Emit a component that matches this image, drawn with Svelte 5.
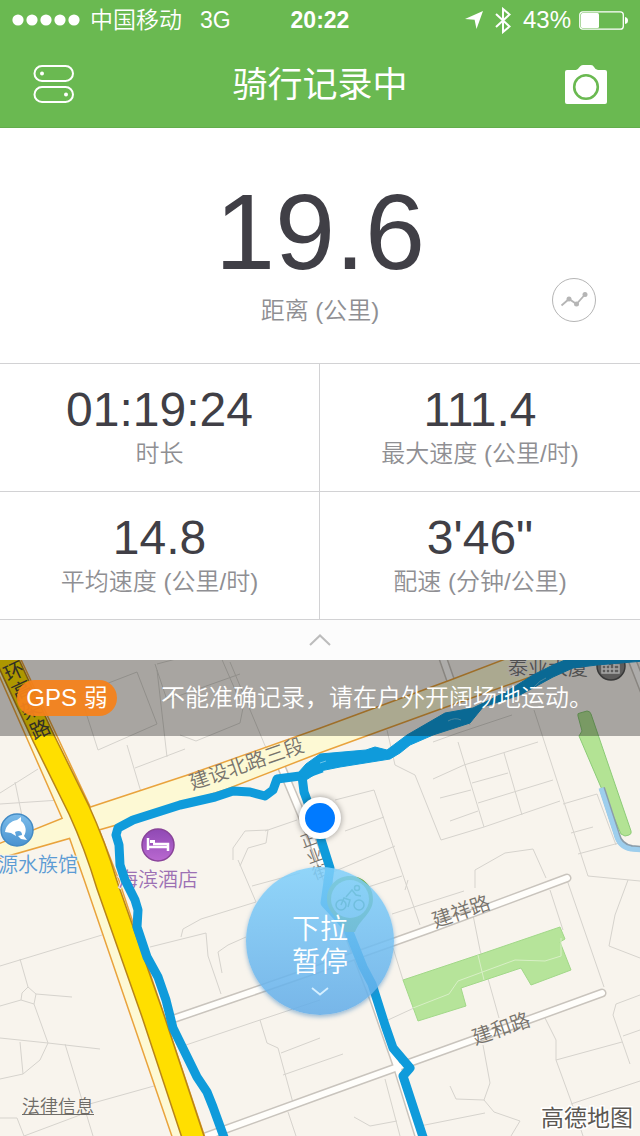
<script lang="ts">
  let stats = [
    { value: '01:19:24', label: '时长' },
    { value: '111.4', label: '最大速度 (公里/时)' },
    { value: '14.8', label: '平均速度 (公里/时)' },
    { value: '3\'46"', label: '配速 (分钟/公里)' },
  ];

  // thin outlines of blocks and buildings
  let blocks = [
    'M80 694 L137 672 L157 724 L98 750 Z M127 745 L141 792 M135 768 L185 749 M155 664 L167 700 L240 674 M180 735 L196 741 L240 723 L243 708 L220 655 M230 662 L266 748 M157 664 L210 650 M157 670 L167 757',
    'M0 793 L38 769 M15 782 L22 816 M0 804 L60 800',
    'M433 742 L458 733 L512 715 M433 779 L464 765 L538 742 M472 783 L508 773 M440 798 L471 790 M478 803 L553 780 M450 821 L478 811 M458 742 L484 827 M504 753 L522 815 M441 840 L484 827 L560 801 M387 730 L395 765 L415 775 L441 840 M470 725 L466 710 M534 710 L588 876 L640 881 M563 804 L597 794 L616 845 M571 833 L593 827 M578 854 L619 843',
    'M335 800 L374 790 L391 840 L420 925 M345 831 L384 817 M333 872 L395 846 M365 888 L402 876 M475 888 L475 870 L505 853 L533 849 L546 878 M392 914 L464 891 M405 890 L408 880',
    'M233 860 L233 848 L245 831 L268 830 L266 843 L248 848 L240 866 M265 831 L297 820 M238 860 L256 902 L201 919 L183 929 L181 937 M252 886 L300 873 M150 947 L206 933 L208 956 L221 994 M246 937 L228 945 L218 952 L222 973',
    'M0 966 L102 935 M20 959 L28 987 L22 993 L21 1000 L34 1004 L36 994 L28 987 M36 994 L72 997 M0 1006 L21 1000 M34 1004 L48 1043 L100 1049 M0 1038 L48 1043 L40 1060 L23 1074 L20 1042 M23 1074 L0 1079 M65 1044 L93 1136 M86 1105 L154 1086 M0 1118 L17 1118 L24 1136 L80 1115',
    'M183 1046 L260 1020 L320 1000 M260 1020 L267 1043 L278 1048 L293 1103 M281 1053 L320 1038 M283 1075 L343 1054 M288 1112 L296 1136 M388 1020 L414 1008 M393 948 L403 980',
    'M470 900 L480 950 L499 1018 M550 890 L563 930 M567 880 L604 987 M628 880 L615 915 L609 946 L640 958 M545 1018 L556 1040 L556 1060 L575 1112 L583 1136 M556 1060 L622 1042 M571 1104 L640 1081 M640 995 L616 1004 L613 1015 L630 1064 M623 1036 L640 1030 M483 1045 L490 1083 L484 1100 L456 1099 L450 1086 M484 1100 L494 1112 L520 1121 L511 1136 M420 1126 L485 1113 M385 1079 L400 1136 M354 1117 L370 1126 L397 1121',
  ];
</script>

<main class="screen">
  <header>
    <div class="status">
      <div class="carrier">
        <svg width="68" height="12" viewBox="0 0 68 12" aria-hidden="true">
          {#each [6, 20, 34, 48, 62] as cx}
            <circle {cx} cy="6" r="5.600" fill="#fff" />
          {/each}
        </svg>
        <span>中国移动</span>
        <span class="network">3G</span>
      </div>
      <strong>20:22</strong>
      <div class="power">
        <svg width="18" height="19" viewBox="0 0 18 19" aria-hidden="true">
          <path d="M18 0 L11.500 18 L9.600 8.800 L0 8 Z" fill="#fff" />
        </svg>
        <svg class="bluetooth" width="16" height="27" viewBox="0 0 16 27" aria-hidden="true">
          <path d="M1 7 L14.500 19.500 L8 25 V2 L14.500 7.500 L1 20" fill="none" stroke="#fff" stroke-width="2" />
        </svg>
        <span class="percent">43%</span>
        <svg width="49" height="19" viewBox="0 0 49 19" aria-hidden="true">
          <rect x="0.800" y="0.800" width="43.500" height="17.400" rx="3" fill="none" stroke="#fff" stroke-width="1.300" />
          <rect x="2" y="2" width="18" height="15" rx="1.500" fill="#fff" />
          <path d="M46 6 Q49 6.500 49 9.500 T46 13 Z" fill="#fff" />
        </svg>
      </div>
    </div>
    <div class="titlebar">
      <button class="icon" aria-label="菜单">
        <svg width="42" height="38" viewBox="0 0 42 38">
          <g fill="none" stroke="#fff" stroke-width="2">
            <rect x="1.500" y="1" width="38.500" height="15" rx="7.500" />
            <rect x="1.500" y="22" width="38.500" height="15" rx="7.500" />
          </g>
          <circle cx="9" cy="8.500" r="2" fill="#fff" />
          <circle cx="33" cy="29.500" r="2" fill="#fff" />
        </svg>
      </button>
      <h1>骑行记录中</h1>
      <button class="icon" aria-label="拍照">
        <svg width="42" height="40" viewBox="0 0 42 40">
          <path d="M2 6 H11 Q13 5.500 14.500 3 Q16 1 18 1 H26 Q28 1 29 3 Q30.500 6 33 6 H40 Q42 6 42 8 V38 Q42 40 40 40 H2 Q0 40 0 38 V8 Q0 6 2 6 Z" fill="#fff" />
          <circle cx="21" cy="23" r="11.800" fill="none" stroke="#6ab951" stroke-width="2.600" />
        </svg>
      </button>
    </div>
  </header>

  <section class="summary">
    <div class="distance">19.6</div>
    <div class="label">距离 (公里)</div>
    <button class="chart" aria-label="图表">
      <svg width="28" height="18" viewBox="0 0 28 18">
        <path d="M1.500 14.500 L9 8 L16.500 13 L25 3.500" fill="none" stroke="#b5b5b5" stroke-width="1.800" />
        <circle cx="9" cy="8" r="2.500" fill="#b5b5b5" />
        <circle cx="16.500" cy="13" r="2.500" fill="#b5b5b5" />
        <circle cx="25" cy="3.500" r="2.500" fill="#b5b5b5" />
      </svg>
    </button>
  </section>

  <section class="stats">
    {#each stats as { value, label }}
      <div class="stat">
        <div class="value">{value}</div>
        <div class="label">{label}</div>
      </div>
    {/each}
  </section>

  <button class="handle" aria-label="收起">
    <svg width="22" height="12" viewBox="0 0 22 12">
      <path d="M1 11 L11 1.500 L21 11" fill="none" stroke="#bcbcbc" stroke-width="2" />
    </svg>
  </button>

  <section class="map">
    <svg class="tiles" viewBox="0 660 640 476" role="img" aria-label="地图">
      <defs>
        <linearGradient id="aqua" x1="0" y1="0" x2="0" y2="1">
          <stop offset="0" stop-color="#7cbcea" />
          <stop offset="1" stop-color="#4a93d0" />
        </linearGradient>
        <linearGradient id="hotel" x1="0" y1="0" x2="0" y2="1">
          <stop offset="0" stop-color="#8f49b4" />
          <stop offset="1" stop-color="#b968d0" />
        </linearGradient>
      </defs>
      <rect y="660" width="640" height="476" fill="#f8f4ed" />
      {#each blocks as d}
        <path {d} fill="none" stroke="#d6d3cd" stroke-width="1" />
      {/each}

      <!-- parks and canal -->
      <path d="M578 716 Q577 713 580 713 L587 711 Q590 711 591 714 L631 831 Q632 834 629 835 L625 836 L621 834 L579 736 L582 731 Z" fill="#b3e394" stroke="#8ccb77" stroke-width="1" />
      <path d="M403 980 L481 954 L560 927 L565 939 L560 942 L571 970 L531 985 L521 968 L461 988 L466 1006 L418 1021 Z" fill="#b6e49a" stroke="#a2d889" stroke-width="1" />
      <path d="M413 1008 L449 994 L458 981 L515 960 L545 961 L561 956 V938 M478 955 L484 980" fill="none" stroke="#d8efc6" stroke-width="1" />
      <path d="M602 788 L617 834 Q620 846 632 848 L644 849" fill="none" stroke="#8b9daa" stroke-width="6" />
      <path d="M601 788 L616 834 Q619 847 631 849 L644 850" fill="none" stroke="#9dceed" stroke-width="5" />

      <!-- side streets: casing, then surface -->
      <g fill="none" stroke-linecap="round" stroke-linejoin="round">
        <g stroke="#c9c4bd" stroke-width="9">
          <path d="M170 1020 L240 996 L315 970 L430 929 L567 878" />
          <path d="M196 1140 L320 1095 L470 1041 L602 993" />
          <path d="M276 754 L312 840 L375 1003 L397 1066 L420 1140" />
          <path d="M454 690 L440 650" />
          <path d="M632 660 L650 706" />
        </g>
        <g stroke="#fffefb" stroke-width="6">
          <path d="M170 1020 L240 996 L315 970 L430 929 L567 878" />
          <path d="M196 1140 L320 1095 L470 1041 L602 993" />
          <path d="M276 754 L312 840 L375 1003 L397 1066 L420 1140" />
          <path d="M454 690 L440 650" />
          <path d="M632 660 L650 706" />
        </g>
      </g>

      <!-- main roads -->
      <g stroke="#e9a33d" stroke-width="3">
        <path d="M-20 630 L10 638 L90 808 L118 880 L205 1140 H174 L85 880 L65 823 Z" fill="#fdf9d4" />
        <path d="M-5 846 L90 808 L187 776 L320 729 L450 681 L510 658 H582 L528 677 L430 712 L320 752 L225 789 L117 824 L-5 859 Z" fill="#fdf9d4" />
      </g>
      <path d="M-20 630 L10 638 L90 808 L118 880 L205 1140 H174 L85 880 L65 823 Z" fill="#fdf9d4" />
      <path d="M-5 846 L90 808 L187 776 L320 729 L450 681 L510 658 H582 L528 677 L430 712 L320 752 L225 789 L117 824 L-5 859 Z" fill="#fdf9d4" />
      <g fill="none">
        <path d="M-2 640 L43 737 L79 810 Q95 845 107 885 L152 1013 L194 1140" stroke="#b98517" stroke-width="23" />
        <path d="M-2 640 L43 737 L79 810 Q95 845 107 885 L152 1013 L194 1140" stroke="#ffdf00" stroke-width="20" />
      </g>

      <!-- points of interest -->
      <circle cx="17" cy="830" r="16" fill="url(#aqua)" stroke="#438bc5" stroke-width="1.500" />
      <path d="M5 832 C6 825 11 821 17 820 L21 817 L21 821 C26 825 27 831 24 836 L27 840 L21 839 L18 836 L22 835 C22 831 19 830 15 832 L16 836 L11 833 Z" fill="#fff" />
      <circle cx="158" cy="845" r="16" fill="url(#hotel)" stroke="#894399" stroke-width="1.500" />
      <path d="M148 838 V850 M148 847 H168 V851 M168 847 V844 H153" fill="none" stroke="#fff" stroke-width="2.500" />
      <rect x="150" y="840" width="5" height="3" fill="#fff" />
      <circle cx="611" cy="666" r="14" fill="#898886" stroke="#555" stroke-width="1.500" />
      <path d="M602 665 H608 V661 H614 V665 H619 V673 H602 Z M606 665 V673 M610 665 V673 M614 665 V673 M602 669 H619" fill="none" stroke="#f5f5f5" stroke-width="1.500" />
      <g class="place">
        <text x="-2" y="872" fill="#5b9bd4">源水族馆</text>
        <text x="118" y="887" fill="#9c70b4">海滨酒店</text>
        <text x="508" y="675" fill="#777">泰业大厦</text>
      </g>

      <!-- road names -->
      <g class="road">
        <text transform="translate(192 790) rotate(-19)">建设北路三段</text>
        <text transform="translate(435 928) rotate(-19)">建祥路</text>
        <text transform="translate(475 1045) rotate(-19)">建和路</text>
      </g>
      <g class="road highway">
        <text transform="translate(8 682) rotate(-25)">环</text>
        <text transform="translate(16 701) rotate(-25)">高</text>
        <text transform="translate(25 720) rotate(-25)">架</text>
        <text transform="translate(34 740) rotate(-25)">路</text>
      </g>
      <g class="road small">
        <text transform="translate(303 848) rotate(-20)">正</text>
        <text transform="translate(309 864) rotate(-20)">业</text>
        <text transform="translate(315 880) rotate(-20)">街</text>
      </g>

      <!-- recorded ride -->
      <g fill="none" stroke="#0f9bdb" stroke-width="9" stroke-linejoin="round">
        <path d="M322 768 L300 776 L277 779 L273 790 L265 796 L250 792 L233 791 L215 797 L180 805 L133 820 L118 828 L116 835 L119 845 L120 865 L125 880 L135 900 L138 910 L137 927 L147 957 L158 977 L166 1000 L173 1028 L197 1077 L207 1092 L213 1107 L225 1140" />
        <path d="M302 776 L304 792 L318 830 L330 868 L325 903 L347 927 L363 967 L372 984 L385 1025 L393 1048 L410 1068 L403 1076 L424 1140" />
      </g>
      <path d="M298 773 L306 764 L320 754 L366 750 L375 747 L387 750 L407 735 L445 713 L473 708 L506 692 L533 675 L553 665 L570 658 H644 V661 L597 665 L573 668 L553 677 L520 695 L483 707 L470 723 L433 735 L410 745 L400 753 L390 759 L340 767 L320 771 L306 780 Z" fill="#0f9bdb" stroke="#0f9bdb" stroke-width="1" />
      <path d="M448 721 Q455 717 461 720 M534 687 Q540 680 546 678 M320 763 L326 761" fill="none" stroke="#6cc5e9" stroke-width="1" />

      <!-- start pin -->
      <path d="M350 876 C363 876 373 886 373 899 C373 913 360 919 355 932 H345 C340 919 327 913 327 899 C327 886 337 876 350 876 Z" fill="#6fae2f" />
      <circle cx="350" cy="899" r="19" fill="#d7efe8" />
      <g fill="none" stroke="#3f8a49" stroke-width="1.500">
        <circle cx="341" cy="905" r="5" />
        <circle cx="359" cy="905" r="5" />
        <circle cx="357" cy="888" r="2.500" />
        <path d="M341 905 L344 898 L350 900 L348 907 M346 897 L352 890 L356 895 L361 896" />
      </g>

      <!-- current position -->
      <circle class="position" cx="320" cy="818" r="21" fill="#fff" />
      <circle cx="320" cy="818" r="15" fill="#007aff" />
      <text class="brand" x="541" y="1126">高德地图</text>
    </svg>

    <div class="banner">
      <span class="gps">GPS 弱</span>
      <p>不能准确记录，请在户外开阔场地运动。</p>
    </div>

    <button class="pause">
      <span>下拉</span>
      <span>暂停</span>
      <svg width="18" height="9" viewBox="0 0 18 9" aria-hidden="true">
        <path d="M1 1 L9 7.500 L17 1" fill="none" stroke="#d5efff" stroke-width="1.800" />
      </svg>
    </button>

    <a class="legal" href="#legal">法律信息</a>
  </section>
</main>

<style>
  :global(body) {
    margin: 0;
    background: #fff;
  }

  .screen {
    display: flex;
    flex-direction: column;
    font-family: "Liberation Sans", "Noto Sans CJK SC", sans-serif;
    font-weight: 350;
    color: #403f46;
  }

  button {
    display: flex;
    align-items: center;
    justify-content: center;
    padding: 0;
    border: 0;
    background: none;
    font: inherit;
    color: inherit;
  }

  header {
    background: #6ab951;
    color: #fff;
    border-bottom: 1px solid #63ad4c;
  }

  .status {
    display: grid;
    grid-template-columns: 1fr auto 1fr;
    align-items: center;
    height: 40px;
    padding: 0 12px;
    font-size: 23px;
    line-height: 40px;
  }

  .status strong {
    font-weight: 700;
  }

  .carrier, .power {
    display: flex;
    align-items: center;
  }

  .carrier {
    gap: 10px;
  }

  .network {
    margin-left: 8px;
  }

  .power {
    justify-content: flex-end;
    gap: 8px;
  }

  .bluetooth {
    margin-left: 4px;
  }

  .percent {
    margin-left: 4px;
    font-size: 24px;
  }

  .titlebar {
    display: flex;
    align-items: center;
    justify-content: space-between;
    height: 87px;
    padding: 0 33px;
  }

  h1 {
    margin: 0;
    padding-top: 2px;
    font-size: 35px;
    line-height: 40px;
    font-weight: 400;
  }

  .summary {
    position: relative;
    padding: 44px 0 36px;
    border-bottom: 1px solid #d2d2d4;
    text-align: center;
  }

  .distance {
    padding-bottom: 3px;
    font-size: 108px;
    line-height: 120px;
  }

  .label {
    font-size: 24px;
    line-height: 32px;
    color: #8f8f93;
  }

  .chart {
    position: absolute;
    right: 44px;
    bottom: 41px;
    width: 44px;
    height: 44px;
    border: 1px solid #b5b5b5;
    border-radius: 50%;
  }

  .stats {
    display: grid;
    grid-template-columns: 1fr 1fr;
  }

  .stat {
    padding: 18px 0 21px;
    border-bottom: 1px solid #d2d2d4;
    text-align: center;
  }

  .stat:nth-child(odd) {
    border-right: 1px solid #d2d2d4;
  }

  .value {
    font-size: 48px;
    line-height: 56px;
  }

  .handle {
    height: 40px;
    background: #fcfcfc;
  }

  .map {
    position: relative;
    overflow: hidden;
  }

  .tiles {
    display: block;
    width: 100%;
  }

  .place, .road {
    font-size: 20px;
    paint-order: stroke;
    stroke: #f8f4ed;
    stroke-width: 2px;
  }

  .road {
    fill: #77736c;
    stroke: none;
  }

  .highway {
    fill: #4a4638;
    font-weight: 400;
  }

  .small {
    font-size: 16px;
  }

  .position {
    filter: drop-shadow(0 0 3px rgba(0, 0, 0, 0.4));
  }

  .brand {
    font-size: 23px;
    font-weight: 400;
    fill: #5c5853;
    paint-order: stroke;
    stroke: #fff;
    stroke-width: 3px;
  }

  .banner {
    position: absolute;
    top: 0;
    left: 0;
    right: 0;
    display: flex;
    align-items: center;
    gap: 44px;
    height: 76px;
    padding-left: 17px;
    background: rgba(0, 0, 0, 0.32);
    color: #fff;
    font-size: 24px;
    line-height: 36px;
  }

  .gps {
    width: 100px;
    border-radius: 18px;
    background: rgba(245, 130, 27, 0.94);
    text-align: center;
  }

  .banner p {
    margin: 0;
  }

  .pause {
    position: absolute;
    top: 207px;
    left: calc(50% - 74px);
    flex-direction: column;
    width: 148px;
    height: 148px;
    padding-top: 26px;
    border-radius: 50%;
    background: linear-gradient(rgba(128, 208, 251, 0.86), rgba(98, 172, 232, 0.86));
    box-shadow: 0 2px 4px rgba(60, 130, 190, 0.5);
    color: #fff;
    font-size: 28px;
    line-height: 33px;
  }

  .pause svg {
    margin-top: 8px;
  }

  .legal {
    position: absolute;
    left: 22px;
    bottom: 17px;
    color: #6f6c67;
    font-size: 18px;
    line-height: 24px;
  }
</style>
